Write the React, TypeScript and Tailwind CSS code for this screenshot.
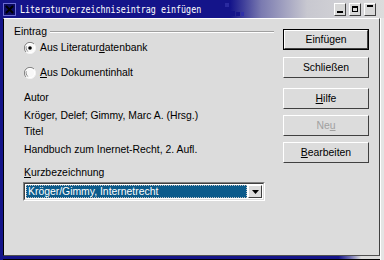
import React from 'react';

const ui = { fontFamily: '"Liberation Sans", Arial, sans-serif' };

function Radio({ checked }: { checked?: boolean }) {
  return (
    <svg width="12" height="12" viewBox="0 0 12 12" className="shrink-0">
      <circle cx="6" cy="6" r="5.5" fill="#ffffff" />
      <path d="M10 2 A5.5 5.5 0 0 0 2 10" stroke="#808080" strokeWidth="1" fill="none" />
      <path d="M2 10 A5.5 5.5 0 0 0 10 2" stroke="#f4f4f4" strokeWidth="1" fill="none" />
      <circle cx="6" cy="6" r="4" fill="#f8f8f8" stroke="#404040" strokeWidth="0.6" strokeDasharray="6 20" strokeDashoffset="-8" />
      {checked && <circle cx="6" cy="6" r="1.8" fill="#000" />}
    </svg>
  );
}

function Btn({ children, def, disabled }: { children: React.ReactNode; def?: boolean; disabled?: boolean }) {
  return (
    <div className={`w-[86px] h-[21px] ${def ? 'border border-black' : ''}`}>
      <div
        className={`h-full flex items-center justify-center border border-t-white border-l-white border-r-[#404040] border-b-[#404040] bg-[#dcdcdc] text-[10.4px] ${
          disabled ? 'text-[#a0a0a0]' : 'text-black'
        }`}
      >
        {children}
      </div>
    </div>
  );
}

function TitleBar() {
  return (
    <div className="relative h-[18px] flex items-center bg-[linear-gradient(to_right,#14148a_0%,#14148a_60%,#7a7ab0_68%,#c8c8d0_80%,#dcdcdc_100%)]">
      <div className="ml-[3px] w-[13px] h-[13px] border border-[#6a6ad0] bg-[#0a0a60] flex items-center justify-center">
        <svg width="9" height="9" viewBox="0 0 9 9">
          <path d="M1 1 L8 8 M8 1 L1 8" stroke="#000" strokeWidth="2" />
        </svg>
      </div>
      <div className="ml-[4px] h-full flex items-center overflow-hidden">
        <span
          className="origin-left scale-x-[0.76] whitespace-nowrap text-white text-[11px] leading-none"
          style={{ fontFamily: '"DejaVu Sans Mono", monospace' }}
        >
          Literaturverzeichniseintrag einfügen
        </span>
      </div>
      {/* dithered squares at the end of the blue */}
      <div className="absolute left-[214px] top-[5px] w-[5px] h-[5px] bg-[#14148a]" />
      <div className="absolute left-[220px] top-[8px] w-[5px] h-[5px] bg-[#14148a]" />
      <div className="absolute left-[225px] top-[3px] w-[4px] h-[4px] bg-[#2a2aa0]" />
      <div className="absolute left-[230px] top-[11px] w-[5px] h-[5px] bg-[#14148a]" />
      <div className="absolute left-[236px] top-[12px] w-[4px] h-[4px] bg-[#14148a]" />
      <div className="absolute left-[241px] top-[12px] w-[3px] h-[4px] bg-[#3030a8]" />
      <div className="ml-auto mr-[8px] flex gap-[3px]">
        {['min', 'max', 'close'].map((k) => (
          <div
            key={k}
            className="w-[12px] h-[13px] bg-[#d8d8d8] border border-t-white border-l-white border-r-[#404040] border-b-[#404040] flex items-end justify-center pb-[2px]"
          >
            {k === 'min' && <div className="w-[6px] h-[2px] bg-black" />}
            {k === 'max' && <div className="w-[6px] h-[6px] border border-t-2 border-black mb-[1px]" />}
            {k === 'close' && <div className="w-[6px] h-[2px] bg-black mb-[6px]" />}
          </div>
        ))}
      </div>
    </div>
  );
}

export default function App() {
  return (
    <div className="w-[384px] h-[260px] flex flex-col overflow-hidden bg-[#dcdcdc]" style={ui}>
      <TitleBar />
      <div className="flex flex-1 min-h-0">
        <div className="w-[3px] bg-[#14148a]" />
        <div className="flex-1 flex flex-col min-w-0">
          <div className="flex-1 border-t border-t-white border-l border-l-black border-b border-b-[#505050] border-r border-r-[#404040] flex text-[10.4px] text-black">
            <div className="w-[270px] pl-[10px] pt-[6px] flex flex-col">
              <div className="flex items-center gap-[3px] h-[14px]">
                <span>Eintrag</span>
                <div className="flex-1 border-t border-t-[#a0a0a0] border-b border-b-white" />
              </div>
              <label className="flex items-center gap-[4px] ml-[10px] mt-[2px] h-[14px]">
                <Radio checked />
                <span>
                  Aus Literatur<u>d</u>atenbank
                </span>
              </label>
              <label className="flex items-center gap-[4px] ml-[10px] mt-[11px] h-[14px]">
                <Radio />
                <span>
                  <u>A</u>us Dokumentinhalt
                </span>
              </label>
              <div className="ml-[10px] mt-[11px] h-[14px] leading-[14px]">Autor</div>
              <div className="ml-[10px] mt-[4px] h-[14px] leading-[14px]">Kröger, Delef; Gimmy, Marc A. (Hrsg.)</div>
              <div className="ml-[10px] mt-[2px] h-[14px] leading-[14px]">Titel</div>
              <div className="ml-[10px] mt-[4px] h-[14px] leading-[14px]">Handbuch zum Inernet-Recht, 2. Aufl.</div>
              <div className="ml-[10px] mt-[9px] h-[14px] leading-[14px]">
                <u>K</u>urzbezeichnung
              </div>
              <div className="ml-[9px] mt-[2px] w-[242px] h-[19px] border border-t-[#808080] border-l-[#808080] border-r-white border-b-white">
                <div className="h-full flex border border-t-[#404040] border-l-[#404040] border-r-[#dcdcdc] border-b-[#dcdcdc] bg-white">
                  <div className="flex-1 m-[1px] bg-[#0c5b8b] text-white flex items-center pl-[2px] outline outline-1 outline-dotted outline-[#c0c0c0] -outline-offset-1">
                    Kröger/Gimmy, Internetrecht
                  </div>
                  <div className="w-[14px] my-[1px] mr-[1px] bg-[#dcdcdc] border border-t-white border-l-white border-r-[#404040] border-b-[#404040] flex items-center justify-center">
                    <svg width="7" height="4" viewBox="0 0 7 4">
                      <path d="M0 0 H7 L3.5 4 Z" fill="#000" />
                    </svg>
                  </div>
                </div>
              </div>
            </div>
            <div className="flex-1 flex flex-col pl-[9px] pt-[10px]">
              <Btn def>Einfügen</Btn>
              <div className="mt-[7px]">
                <Btn>Schließen</Btn>
              </div>
              <div className="mt-[10px]">
                <Btn>
                  <u>H</u>ilfe
                </Btn>
              </div>
              <div className="mt-[6px]">
                <Btn disabled>
                  Ne<u>u</u>
                </Btn>
              </div>
              <div className="mt-[6px]">
                <Btn>
                  <u>B</u>earbeiten
                </Btn>
              </div>
            </div>
          </div>
          <div className="h-[4px] bg-[linear-gradient(to_right,#14148a_0%,#14148a_89%,#6a6ab0_92%,#dcdcdc_95%)] border-b border-b-black" />
        </div>
        <div className="w-[4px] bg-[#e4e4e4] border-l border-l-white" />
      </div>
    </div>
  );
}
